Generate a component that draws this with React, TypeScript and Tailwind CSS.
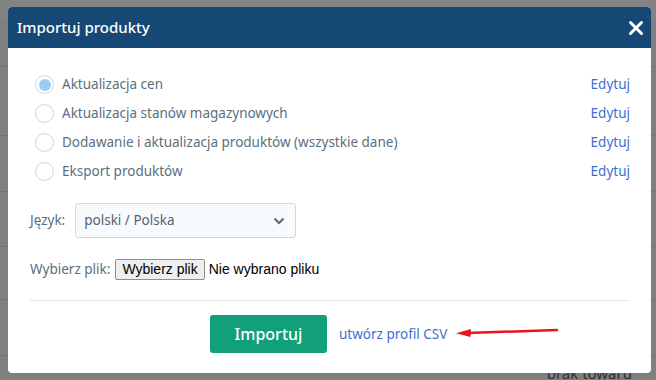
import React from "react";

const options = [
  { label: "Aktualizacja cen", checked: true },
  { label: "Aktualizacja stanów magazynowych", checked: false },
  { label: "Dodawanie i aktualizacja produktów (wszystkie dane)", checked: false },
  { label: "Eksport produktów", checked: false }
];

const font = { fontFamily: '"Noto Sans", "Open Sans", sans-serif' };

function Radio({ checked }: { checked: boolean }) {
  return (
    <span className="flex h-[19px] w-[19px] items-center justify-center rounded-full border border-[#c9d8e8] bg-white">
      {checked && <span className="h-[12px] w-[12px] rounded-full bg-[#9dcbf5]" />}
    </span>
  );
}

function Backdrop() {
  return (
    <div className="flex h-[380px] w-[656px] flex-col bg-[#7f7f7f]">
      <div className="h-[20px] bg-[#838383]" />
      <div className="h-[47px] border-b border-[#747474]" />
      <div className="h-[69px] border-b border-[#747474]" />
      <div className="h-[56px] border-b border-[#747474]" />
      <div className="h-[55px] border-b border-[#747474]" />
      <div className="h-[53px] border-b border-[#747474]" />
      <div className="flex h-[56px] border-b border-[#747474]" />
      <div className="flex flex-1 items-end justify-end pr-[24px] text-[15px] leading-[14px] text-[#2f2f2f]">
        brak towaru
      </div>
    </div>
  );
}

function ImportModal() {
  return (
    <div
      className="absolute left-[8px] top-[7px] flex h-[366px] w-[643px] flex-col overflow-hidden rounded-[4px] bg-white"
      style={font}
    >
      <div className="flex h-[41px] items-center justify-between bg-[#154874] pl-[9px] pr-[7px]">
        <span className="text-[15px] font-medium text-white">Importuj produkty</span>
        <svg width="16" height="16" viewBox="0 0 16 16" className="mt-[1px]">
          <path d="M2.5 2.5 L13.5 13.5 M13.5 2.5 L2.5 13.5" stroke="white" strokeWidth="3" strokeLinecap="round" />
        </svg>
      </div>

      <div className="flex flex-col pl-[22px] pr-[21px] pt-[27px]">
        <div className="flex flex-col gap-[10px]">
          {options.map((o) => (
            <div key={o.label} className="flex h-[19px] items-center justify-between">
              <div className="flex items-center gap-[8px] pl-[5px]">
                <Radio checked={o.checked} />
                <span className="text-[13.5px] text-[#5b6f80]">{o.label}</span>
              </div>
              <span className="text-[13.5px] text-[#3c6fd3]">Edytuj</span>
            </div>
          ))}
        </div>

        <div className="mt-[22px] flex items-center gap-[10px]">
          <span className="text-[13.5px] text-[#5b6f80]">Język:</span>
          <div className="flex h-[35px] w-[221px] items-center justify-between rounded-[3px] border border-[#c7dbed] bg-[#f8fbfe] pl-[8px] pr-[10px]">
            <span className="text-[13.5px] text-[#5b6070]">polski / Polska</span>
            <svg width="12" height="8" viewBox="0 0 12 8">
              <path d="M1.5 1.5 L6 6 L10.5 1.5" fill="none" stroke="#5b6f80" strokeWidth="2.2" />
            </svg>
          </div>
        </div>

        <div className="mt-[21px] flex items-center gap-[5px]">
          <span className="text-[13.5px] text-[#5b6f80]">Wybierz plik:</span>
          <div className="flex items-center gap-[4px]" style={{ fontFamily: '"Liberation Sans", Arial, sans-serif' }}>
            <span className="flex h-[21px] items-center rounded-[2px] border border-[#8f8f8f] bg-[#efefef] px-[6px] text-[14px] text-black">
              Wybierz plik
            </span>
            <span className="text-[14px] text-black">Nie wybrano pliku</span>
          </div>
        </div>

        <div className="mt-[20px] mr-[1px] h-[1px] bg-[#e3e3e3]" />

        <div className="mt-[14px] flex items-center gap-[12px] pl-[180px]">
          <button className="flex h-[38px] w-[117px] items-center justify-center rounded-[3px] bg-[#12a07a] text-[16px] font-medium text-white">
            Importuj
          </button>
          <span className="text-[13.5px] text-[#3c6fd3]">utwórz profil CSV</span>
          <svg width="104" height="14" viewBox="0 0 104 14" className="ml-[-4px] mt-[-4px]">
            <path d="M12 8 L102 5" stroke="#e8161a" strokeWidth="2.5" strokeLinecap="round" />
            <path d="M1 8.3 L16 4 L15.5 12 Z" fill="#e8161a" />
          </svg>
        </div>
      </div>
    </div>
  );
}

export default function App() {
  return (
    <div className="relative h-[380px] w-[656px] overflow-hidden" style={font}>
      <Backdrop />
      <ImportModal />
    </div>
  );
}
